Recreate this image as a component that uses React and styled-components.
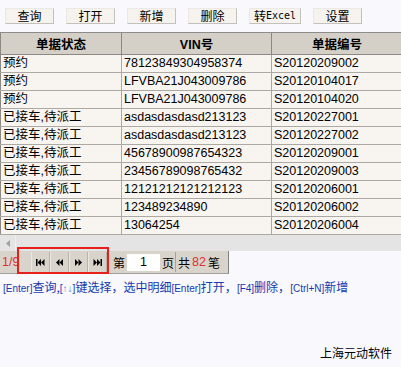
import React from 'react';
import styled, { createGlobalStyle } from 'styled-components';

const GlobalStyle = createGlobalStyle`
  html, body {
    margin: 0;
    padding: 0;
    background: #f9f9fd;
  }
`;

const Page = styled.div`
  width: 401px;
  height: 367px;
  overflow: hidden;
  position: relative;
  background: #f9f9fd;
  font-family: "Liberation Sans", "Noto Sans CJK SC", sans-serif;
  font-size: 12.5px;
  color: #000;
`;

const Toolbar = styled.div`
  display: flex;
  gap: 12px;
  padding: 8px 0 0 5px;
  height: 17px;
`;

const ToolButton = styled.button`
  width: ${props => props.wide ? '52px' : '49px'};
  height: 16px;
  padding: 0;
  margin: 0;
  background: #f6f2ee;
  border: 1px solid #ece8e4;
  border-right-color: #c4c0bc;
  border-bottom-color: #c4c0bc;
  font-family: "Noto Sans CJK SC", sans-serif;
  font-size: 12px;
  line-height: 14px;
  color: #000;
  display: flex;
  align-items: center;
  justify-content: center;
`;

const Mono = styled.span`
  font-family: "DejaVu Sans Mono", monospace;
  font-size: 10px;
`;

const GridWrap = styled.div`
  margin-top: 7px;
  width: 401px;
  overflow: hidden;
  border-top: 1px solid #8c8c8c;
`;

const Grid = styled.table`
  border-collapse: collapse;
  table-layout: fixed;
  width: 402px;
`;

const HeadCell = styled.th`
  height: 21px;
  padding: 0;
  background: #d4d0c8;
  border-left: 1px solid #f4f2ee;
  border-right: 1px solid #8c8884;
  border-bottom: 1px solid #8c8884;
  font-family: "Liberation Sans", "Noto Sans CJK SC", sans-serif;
  font-size: 12.5px;
  font-weight: bold;
  text-align: center;
  &:first-child {
    border-left: 1px solid #8c8884;
  }
`;

const Cell = styled.td`
  height: 17px;
  padding: 0 0 0 2px;
  background: #f8f4f0;
  border-right: 1px solid #aca8a4;
  border-bottom: 1px solid #aca8a4;
  white-space: nowrap;
  overflow: hidden;
  line-height: 17px;
  &:first-child {
    border-left: 1px solid #8c8884;
  }
`;

const ScrollRow = styled.div`
  height: 16px;
  width: 401px;
  background: #e4e4e4;
  display: flex;
  align-items: center;
`;

const ScrollArrow = styled.div`
  width: 15px;
  height: 16px;
  display: flex;
  align-items: center;
  justify-content: center;
  border-right: 1px solid #f0f0f0;
`;

const PagerRow = styled.div`
  width: 228px;
  height: 22px;
  background: #d8d4cc;
  border-right: 1px solid #808080;
  border-bottom: 1px solid #a0a0a0;
  display: flex;
  align-items: center;
  position: relative;
`;

const PageInfo = styled.span`
  color: #e03030;
  width: 29px;
  padding-left: 2px;
`;

const NavGroup = styled.div`
  display: flex;
  height: 21px;
`;

const NavButton = styled.div`
  width: 17px;
  height: 21px;
  display: flex;
  align-items: center;
  justify-content: center;
  background: #d8d4cc;
  border-right: 1px solid #b8b4ac;
  border-left: 1px solid #ece8e0;
`;

const Label = styled.span`
  font-family: "Noto Sans CJK SC", sans-serif;
  font-size: 12px;
  margin: ${props => props.margin || '0'};
`;

const PageInput = styled.div`
  width: 33px;
  height: 17px;
  background: #fff;
  text-align: center;
  line-height: 17px;
  margin: 0 2px;
`;

const Divider = styled.div`
  width: 1px;
  height: 20px;
  background: #a8a49c;
  margin: 0 2px 0 1px;
`;

const Red = styled.span`
  color: #e03030;
  margin: 0 2px;
`;

const Highlight = styled.div`
  position: absolute;
  left: 17px;
  top: -4px;
  width: 88px;
  height: 23px;
  border: 2px solid #e8201c;
`;

const Help = styled.div`
  margin-top: 4px;
  padding-left: 3px;
  color: #1838b0;
  font-family: "Noto Sans CJK SC", sans-serif;
  font-size: 12px;
  white-space: nowrap;
`;

const Key = styled.span`
  font-family: "Liberation Sans", sans-serif;
  font-size: 10px;
  color: ${props => props.light ? '#4a78e0' : '#1838b0'};
`;

const Credit = styled.div`
  position: absolute;
  right: 9px;
  bottom: 6px;
  font-family: "Noto Sans CJK SC", sans-serif;
  font-size: 12px;
`;

const rows = [
  ['预约', '78123849304958374', 'S20120209002'],
  ['预约', 'LFVBA21J043009786', 'S20120104017'],
  ['预约', 'LFVBA21J043009786', 'S20120104020'],
  ['已接车,待派工', 'asdasdasdasd213123', 'S20120227001'],
  ['已接车,待派工', 'asdasdasdasd213123', 'S20120227002'],
  ['已接车,待派工', '45678900987654323', 'S20120209001'],
  ['已接车,待派工', '23456789098765432', 'S20120209003'],
  ['已接车,待派工', '12121212121212123', 'S20120206001'],
  ['已接车,待派工', '123489234890', 'S20120206002'],
  ['已接车,待派工', '13064254', 'S20120206004'],
];

const NavIcon = ({ dir, bar }) => {
  const left = dir === 'left';
  return (
    <svg width="9" height="7" viewBox="0 0 9 7">
      {left ? (
        <>
          {bar && <rect x="0" y="0" width="1.5" height="7" fill="#000" />}
          <polygon points={bar ? '1.5,3.5 5,0 5,7' : '1,3.5 4.5,0 4.5,7'} fill="#000" />
          <polygon points={bar ? '5,3.5 8.5,0 8.5,7' : '4.5,3.5 8,0 8,7'} fill="#000" />
        </>
      ) : (
        <>
          <polygon points={bar ? '0.5,0 4,3.5 0.5,7' : '1,0 4.5,3.5 1,7'} fill="#000" />
          <polygon points={bar ? '4,0 7.5,3.5 4,7' : '4.5,0 8,3.5 4.5,7'} fill="#000" />
          {bar && <rect x="7.5" y="0" width="1.5" height="7" fill="#000" />}
        </>
      )}
    </svg>
  );
};

const App = () => (
  <Page>
    <GlobalStyle />
    <Toolbar>
      <ToolButton>查询</ToolButton>
      <ToolButton>打开</ToolButton>
      <ToolButton>新增</ToolButton>
      <ToolButton>删除</ToolButton>
      <ToolButton wide>转<Mono>Excel</Mono></ToolButton>
      <ToolButton>设置</ToolButton>
    </Toolbar>
    <GridWrap>
      <Grid>
        <colgroup>
          <col style={{ width: 121 }} />
          <col style={{ width: 150 }} />
          <col style={{ width: 131 }} />
        </colgroup>
        <thead>
          <tr>
            <HeadCell>单据状态</HeadCell>
            <HeadCell>VIN号</HeadCell>
            <HeadCell>单据编号</HeadCell>
          </tr>
        </thead>
        <tbody>
          {rows.map((r, i) => (
            <tr key={i}>
              <Cell>{r[0]}</Cell>
              <Cell>{r[1]}</Cell>
              <Cell>{r[2]}</Cell>
            </tr>
          ))}
        </tbody>
      </Grid>
    </GridWrap>
    <ScrollRow>
      <ScrollArrow>
        <svg width="4" height="7" viewBox="0 0 4 7">
          <polygon points="0,3.5 4,0 4,7" fill="#a0a0a0" />
        </svg>
      </ScrollArrow>
    </ScrollRow>
    <PagerRow>
      <PageInfo>1/9</PageInfo>
      <NavGroup>
        <NavButton><NavIcon dir="left" bar /></NavButton>
        <NavButton><NavIcon dir="left" /></NavButton>
        <NavButton><NavIcon dir="right" /></NavButton>
        <NavButton><NavIcon dir="right" bar /></NavButton>
      </NavGroup>
      <Label margin="0 0 0 6px">第</Label>
      <PageInput>1</PageInput>
      <Label>页</Label>
      <Divider />
      <Label>共</Label>
      <Red>82</Red>
      <Label>笔</Label>
      <Highlight />
    </PagerRow>
    <Help>
      <Key>[Enter]</Key>查询,<Key>[<Key light>↑↓</Key>]</Key>键选择，选中明细<Key>[Enter]</Key>打开，<Key>[F4]</Key>删除，<Key>[Ctrl+N]</Key>新增
    </Help>
    <Credit>上海元动软件</Credit>
  </Page>
);

export default App;
